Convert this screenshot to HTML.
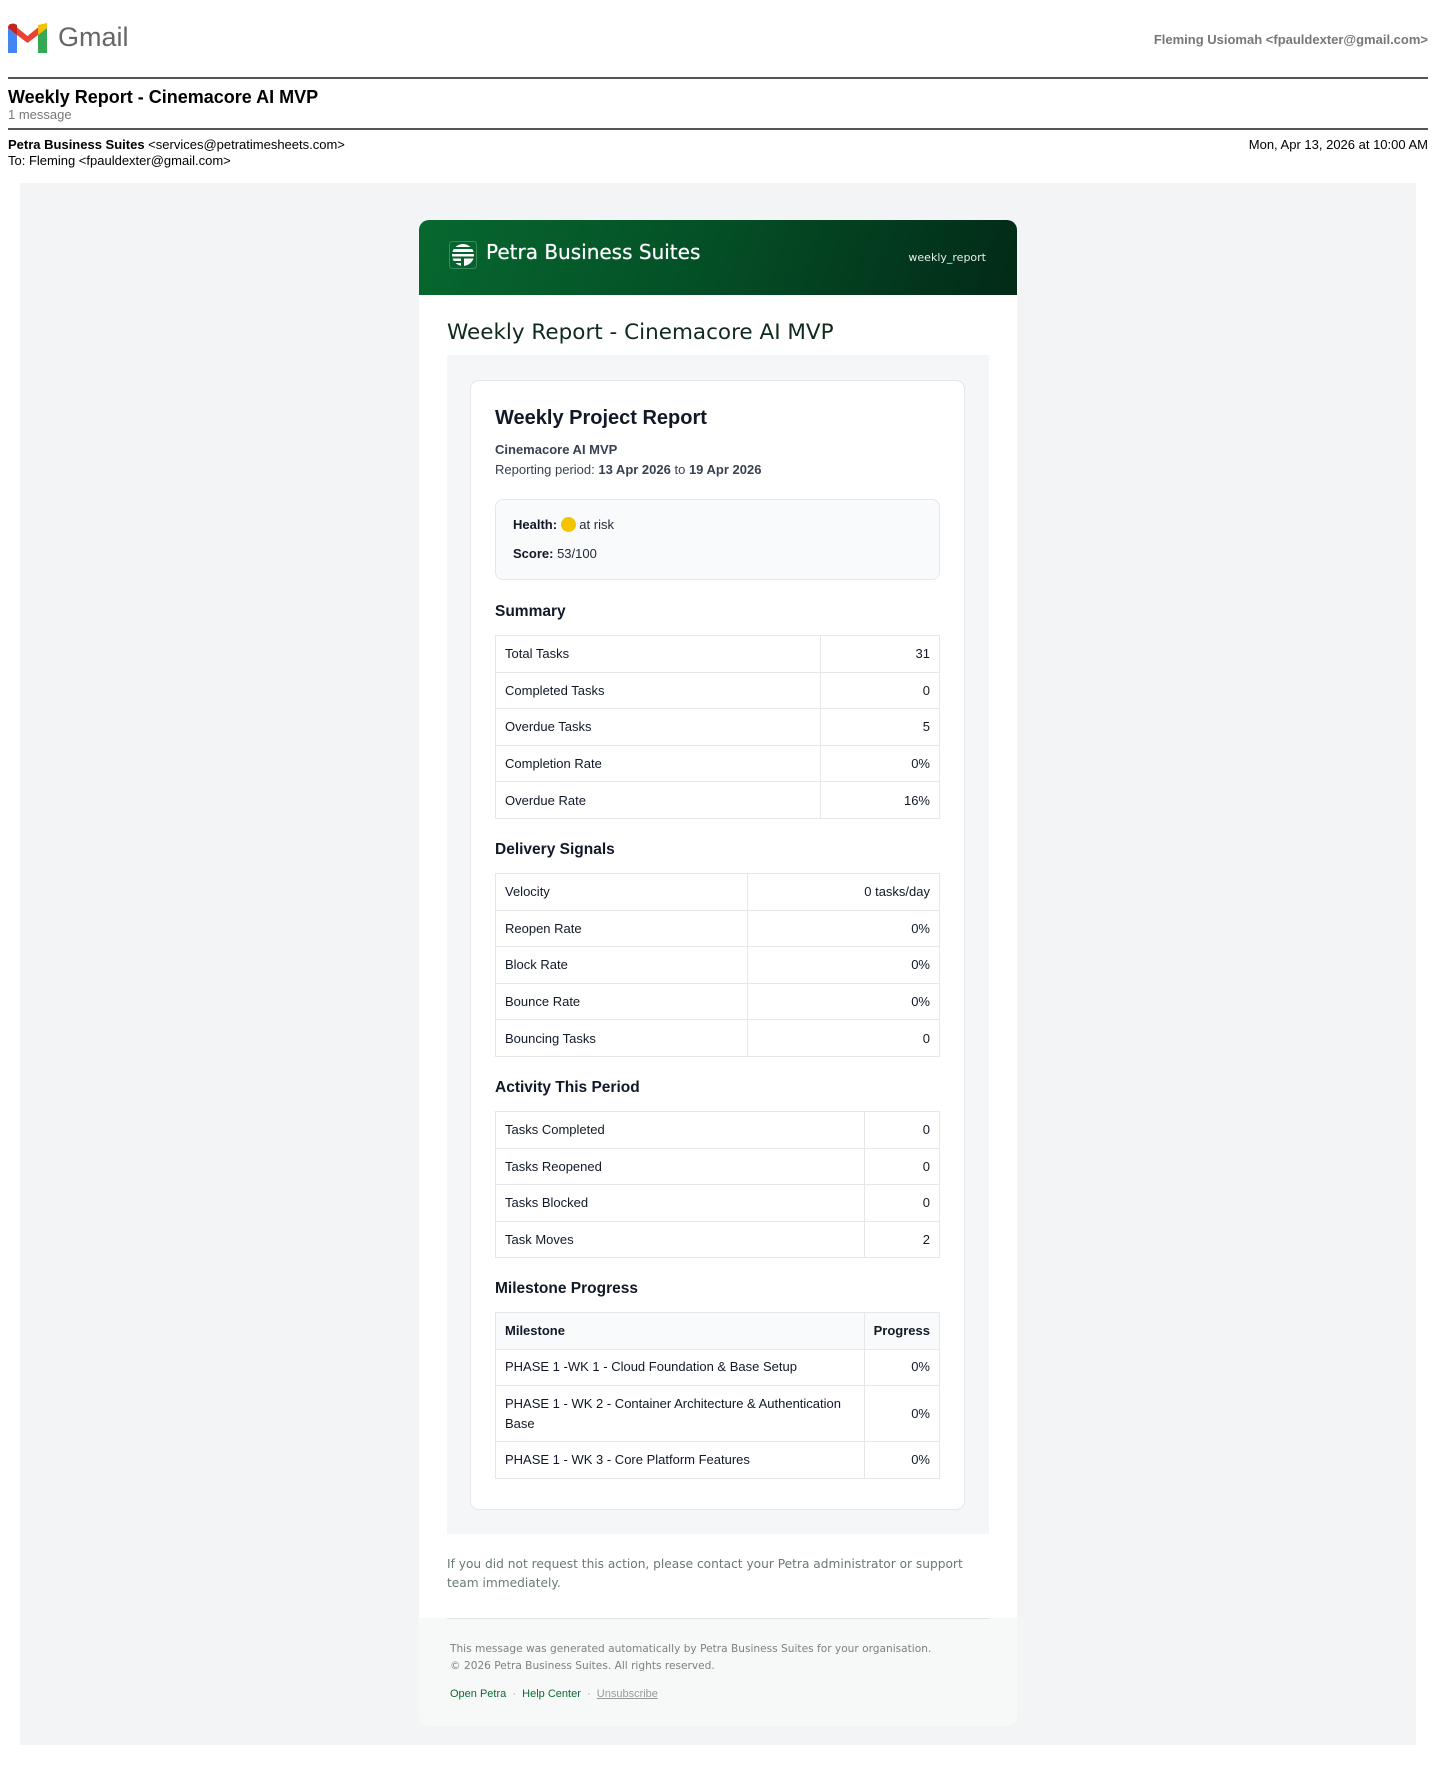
<!DOCTYPE html>
<html><head><meta charset="utf-8"><style>
*{margin:0;padding:0;box-sizing:border-box}
body{width:1440px;height:1769px;background:#fff;font-family:"Liberation Sans",Arial,sans-serif;position:relative;overflow:hidden;color:#000}
.a{position:absolute}
.hr{position:absolute;left:8px;width:1420px;height:2px;background:#555}
table{border-collapse:collapse;position:absolute;left:495px;width:445px;font-size:13px;color:#111827}
td,th{border:1px solid #e5e7eb;padding:0 9px;height:36.6px}
td.r,th.r{text-align:right}
th{text-align:left;background:#f9fafb;font-weight:bold;color:#111827}
h3{position:absolute;left:495px;font-size:15.5px;font-weight:bold;color:#111827}
.m{font-family:"DejaVu Sans","Liberation Sans",sans-serif}
</style></head><body>
<svg class="a" style="left:8px;top:23px" width="39" height="30" viewBox="0 0 39 30">
<path d="M0 5 L0 30 L9 30 L9 12 Z" fill="#4285f4"/>
<path d="M30 12 L30 30 L39 30 L39 5 Z" fill="#34a853"/>
<path d="M0 5 Q0 -1 6 2 L19.5 13 L33 2 Q39 -1 39 5 L30 12 L19.5 20 L9 12 Z" fill="#ea4335"/>
<path d="M30 2 L39 -0 L39 5 L30 12 Z" fill="#fbbc04"/>
<path d="M0 5 L9 12 L9 2 Q3 -2 0 5Z" fill="#c5221f"/>
</svg>
<div class="a" style="left:58px;top:22px;font-size:27px;color:#666">Gmail</div>
<div class="a" style="right:12px;top:32px;font-size:13px;font-weight:bold;color:#777">Fleming Usiomah &lt;fpauldexter@gmail.com&gt;</div>
<div class="hr" style="top:77px"></div>
<div class="a" style="left:8px;top:87px;font-size:18px;font-weight:bold">Weekly Report - Cinemacore AI MVP</div>
<div class="a" style="left:8px;top:107px;font-size:13px;color:#777">1 message</div>
<div class="hr" style="top:128px"></div>
<div class="a" style="left:8px;top:137px;font-size:13px"><b>Petra Business Suites</b> &lt;services@petratimesheets.com&gt;</div>
<div class="a" style="left:8px;top:153px;font-size:13px">To: Fleming &lt;fpauldexter@gmail.com&gt;</div>
<div class="a" style="right:12px;top:137px;font-size:13px">Mon, Apr 13, 2026 at 10:00 AM</div>
<div class="a" style="left:20px;top:183px;width:1396px;height:1562px;background:#f3f4f6"></div>
<div class="a" style="left:419px;top:220px;width:598px;height:1506px;background:#fff;border-radius:10px;overflow:hidden">
 <div style="height:75px;background:linear-gradient(110deg,#07682f 0%,#045127 45%,#022a17 100%)"></div>
</div>
<svg class="a" style="left:449px;top:241px" width="28" height="28" viewBox="0 0 28 28">
<rect x="0.5" y="0.5" width="27" height="27" rx="3" fill="none" stroke="#3a8a5a" stroke-width="1"/>
<clipPath id="c"><circle cx="14" cy="14" r="11"/></clipPath>
<g clip-path="url(#c)" fill="#fff"><rect x="0" y="3" width="28" height="3"/><rect x="0" y="8" width="28" height="3"/><rect x="0" y="13" width="28" height="2.5"/><rect x="0" y="17.5" width="12" height="2.5"/><rect x="0" y="22" width="12" height="3"/><path d="M15 17.5 L26 17.5 L26 26 L15 26 Z"/></g>
</svg>
<div class="a m" style="left:486px;top:240px;font-size:20px;color:#fff;text-shadow:0 0 0.6px #fff">Petra Business Suites</div>
<div class="a m" style="right:454px;top:251px;font-size:11px;color:#e6efe9">weekly_report</div>
<div class="a m" style="left:447px;top:320px;font-size:21.5px;color:#0f2a1c">Weekly Report - Cinemacore AI MVP</div>
<div class="a" style="left:447px;top:355px;width:542px;height:1179px;background:#f5f6f8"></div>
<div class="a" style="left:470px;top:380px;width:495px;height:1130px;background:#fff;border:1px solid #e5e7eb;border-radius:9px"></div>
<div class="a" style="left:495px;top:407px;font-size:20px;font-weight:bold;color:#111827">Weekly Project Report</div>
<div class="a" style="left:495px;top:442px;font-size:13px;font-weight:bold;color:#374151">Cinemacore AI MVP</div>
<div class="a" style="left:495px;top:462px;font-size:13px;color:#374151">Reporting period: <b>13 Apr 2026</b> to <b>19 Apr 2026</b></div>
<div class="a" style="left:495px;top:499px;width:445px;height:81px;background:#f9fafb;border:1px solid #e5e7eb;border-radius:8px"></div>
<div class="a" style="left:513px;top:517px;font-size:13px;color:#1f2937"><b style="color:#111827">Health:</b> <span style="display:inline-block;width:15px;height:15px;border-radius:50%;background:#f5c400;vertical-align:-3px"></span> at risk</div>
<div class="a" style="left:513px;top:546px;font-size:13px;color:#1f2937"><b style="color:#111827">Score:</b> 53/100</div>

<h3 style="top:603px">Summary</h3>
<table style="top:635px"><colgroup><col style="width:325px"><col></colgroup>
<tr><td>Total Tasks</td><td class="r">31</td></tr>
<tr><td>Completed Tasks</td><td class="r">0</td></tr>
<tr><td>Overdue Tasks</td><td class="r">5</td></tr>
<tr><td>Completion Rate</td><td class="r">0%</td></tr>
<tr><td>Overdue Rate</td><td class="r">16%</td></tr></table>

<h3 style="top:841px">Delivery Signals</h3>
<table style="top:873px"><colgroup><col style="width:252px"><col></colgroup>
<tr><td>Velocity</td><td class="r">0 tasks/day</td></tr>
<tr><td>Reopen Rate</td><td class="r">0%</td></tr>
<tr><td>Block Rate</td><td class="r">0%</td></tr>
<tr><td>Bounce Rate</td><td class="r">0%</td></tr>
<tr><td>Bouncing Tasks</td><td class="r">0</td></tr></table>

<h3 style="top:1079px">Activity This Period</h3>
<table style="top:1111px"><colgroup><col style="width:369px"><col></colgroup>
<tr><td>Tasks Completed</td><td class="r">0</td></tr>
<tr><td>Tasks Reopened</td><td class="r">0</td></tr>
<tr><td>Tasks Blocked</td><td class="r">0</td></tr>
<tr><td>Task Moves</td><td class="r">2</td></tr></table>

<h3 style="top:1280px">Milestone Progress</h3>
<table style="top:1312px;line-height:20px"><colgroup><col style="width:372px"><col></colgroup>
<tr><th>Milestone</th><th class="r">Progress</th></tr>
<tr><td>PHASE 1 -WK 1 - Cloud Foundation &amp; Base Setup</td><td class="r">0%</td></tr>
<tr><td style="height:56px;padding-right:4px">PHASE 1 - WK 2 - Container Architecture &amp; Authentication Base</td><td class="r">0%</td></tr>
<tr><td>PHASE 1 - WK 3 - Core Platform Features</td><td class="r">0%</td></tr></table>

<div class="a m" style="left:447px;top:1555px;width:545px;font-size:12.2px;line-height:19px;color:#6b7a72">If you did not request this action, please contact your Petra administrator or support team immediately.</div>
<div class="a" style="left:419px;top:1618px;width:598px;height:108px;background:#f7f8f8;border-radius:0 0 10px 10px"></div>
<div class="a" style="left:447px;top:1618px;width:542px;height:1px;background:#e2e5e3"></div>
<div class="a m" style="left:450px;top:1641px;font-size:10.6px;line-height:17px;color:#7a837e">This message was generated automatically by Petra Business Suites for your organisation.<br>© 2026 Petra Business Suites. All rights reserved.</div>
<div class="a" style="left:450px;top:1688px;font-size:11px;color:#0b6b35">Open Petra <span style="color:#999">&nbsp;·&nbsp;</span> Help Center <span style="color:#999">&nbsp;·&nbsp;</span> <span style="color:#999;text-decoration:underline">Unsubscribe</span></div>
</body></html>
